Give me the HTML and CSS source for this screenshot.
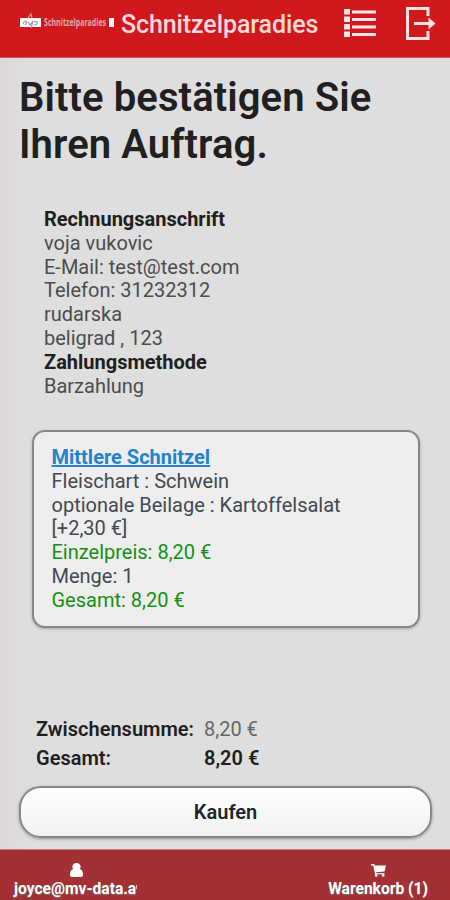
FILE: index.html
```html
<!DOCTYPE html>
<html lang="de">
<head>
<meta charset="utf-8">
<title>Schnitzelparadies</title>
<link rel="stylesheet" href="styles.css">
</head>
<body>
<div class="app">
  <header class="topbar">
    <div class="logo">
      <span class="logo-badge"><svg viewBox="0 0 21 18"><path class="logo-bg" d="M0 5H21V14H0Z"/><path class="logo-mark" d="M3 11Q4 7 7 9L5 12M8 9L10 12L13 8L11 15M14 9Q18 7 17 11L14 12"/><path class="logo-tip" d="M8 5L11 1L12 5"/></svg></span>
      <span class="logo-text">Schnitzelparadies</span>
      <span class="logo-end"></span>
    </div>
    <div class="brand">Schnitzelparadies</div>
    <svg class="icon-list" viewBox="0 0 34 30"><path d="M1 1h6v5.500H1zM1 8.500h6v5.500H1zM1 16h6v5.500H1zM1 23.500h6v5.500H1zM9 2.500h24v3H9zM9 10h24v3H9zM9 17.500h24v3H9zM9 25h24v3H9z"/></svg>
    <svg class="icon-exit" viewBox="0 0 32 36"><path class="exit-line" d="M23 10V2.500H2.500V32.500H23V25M9 17.500H25"/><path class="exit-head" d="M23.500 11.500L30.500 17.500L23.500 23.500Z"/></svg>
  </header>
  <main class="content">
    <h1 class="title">Bitte bestätigen Sie<br>Ihren Auftrag.</h1>
    <section class="address">
      <p><b>Rechnungsanschrift</b></p>
      <p>voja vukovic</p>
      <p>E-Mail: test@test.com</p>
      <p>Telefon: 31232312</p>
      <p>rudarska</p>
      <p>beligrad , 123</p>
      <p><b>Zahlungsmethode</b></p>
      <p>Barzahlung</p>
    </section>
    <section class="card">
      <p><a class="product">Mittlere Schnitzel</a></p>
      <p>Fleischart : Schwein</p>
      <p>optionale Beilage : Kartoffelsalat</p>
      <p>[+2,30 €]</p>
      <p class="price">Einzelpreis: 8,20 €</p>
      <p>Menge: 1</p>
      <p class="price">Gesamt: 8,20 €</p>
    </section>
    <dl class="totals">
      <dt>Zwischensumme:</dt><dd>8,20 €</dd>
      <dt>Gesamt:</dt><dd class="sum">8,20 €</dd>
    </dl>
    <button class="buy">Kaufen</button>
  </main>
  <footer class="tabbar">
    <div class="tab tab-user">
      <svg class="icon-user" viewBox="0 0 14 15"><path d="M7 0a4 4 0 0 1 3.500 6.500C13 7.500 14 9.500 14 12.500Q14 15 12 15H2Q0 15 0 12.500C0 9.500 1 7.500 3.500 6.500A4 4 0 0 1 7 0Z"/></svg>
      <span class="tab-label">joyce@mv-data.a</span>
    </div>
    <div class="tab tab-cart">
      <svg class="icon-cart" viewBox="0 0 16 14"><path d="M0 0H3.500L4 1.500H16L14.500 8L5.500 9V10H14.500V11H4.200L4 9.500L2.300 1.500H0Z"/><circle cx="5.500" cy="12.300" r="1.500"/><circle cx="13" cy="12.300" r="1.500"/></svg>
      <span class="tab-label">Warenkorb (1)</span>
    </div>
  </footer>
</div>
</body>
</html>
```

FILE: styles.css
```css
* { box-sizing: border-box; }
body { margin: 0; font-family: Roboto, sans-serif; }
p, h1, dl, dd { margin: 0; }
b { font-weight: 700; color: #202020; }
.app {
  width: 450px; height: 900px; overflow: hidden;
  display: flex; flex-direction: column;
  background: linear-gradient(90deg, #dcd8d9 0, #dedede 24px, #dedede 100%);
}
.topbar {
  height: 58px; flex: none; display: flex; align-items: flex-start;
  background: #d0181d; border-bottom: 1px solid #c9565a;
  padding-left: 20px;
}
.logo { display: flex; align-items: center; width: 95px; height: 18px; margin-top: 13px; flex: none; }
.logo-badge { width: 21px; height: 18px; }
.logo-badge svg { display: block; width: 21px; height: 18px; }
.logo-bg { fill: #fff; }
.logo-mark { fill: none; stroke: #a99; stroke-width: 1.200; }
.logo-tip { fill: none; stroke: #d9a09c; stroke-width: 1.200; }
.logo-text {
  width: 63px; margin-left: 3px; white-space: nowrap;
  font: 700 11px/18px "Open Sans", sans-serif; color: #dda9a5;
  transform: scaleX(.64); transform-origin: 0 50%;
}
.logo-end { width: 5px; height: 9px; margin-left: 2px; background: #fff; }
.brand {
  width: 222px; margin: 10px 0 0 6px; white-space: nowrap;
  font-weight: 500; font-size: 25px; line-height: 30px; letter-spacing: -.1px; color: #ffd9d9;
}
.icon-list { width: 34px; height: 30px; margin-top: 8px; fill: #ffe6e6; }
.icon-exit { width: 32px; height: 36px; margin: 6px 0 0 28px; }
.exit-line { fill: none; stroke: #ffe2e2; stroke-width: 3; }
.exit-head { fill: #ffe2e2; }
.content { flex: 1; display: flex; flex-direction: column; padding: 16px 18px 0 19px; }
.title { font-weight: 600; font-size: 40px; line-height: 47px; letter-spacing: .1px; color: #202020; white-space: nowrap; }
.address { margin: 40px 0 0 25px; font-size: 20px; line-height: 23.8px; color: #4c4c4c; }
.card {
  width: 388px; height: 198px; margin: 31.600px 0 0 12.500px; padding: 14px 18px;
  border: 2px solid #888; border-radius: 13px; background: #eee;
  box-shadow: 0 1px 3px rgba(0,0,0,.25);
  font-size: 20px; line-height: 23.8px; color: #414a50; white-space: nowrap;
}
.product { font-weight: 700; color: #2583c9; text-decoration: underline; }
.price { color: #149014; }
.totals {
  margin: 87px 0 0 17px; display: grid; grid-template-columns: 168px auto;
  font-size: 20px; line-height: 29px; color: #666;
}
.totals dt, .totals .sum { font-weight: 600; color: #202020; }
.buy {
  width: 413px; height: 52px; margin: 13px 0 0; padding: 0;
  border: 2px solid #888; border-radius: 22px;
  background: linear-gradient(#fff, #f1f1f1);
  box-shadow: 0 1px 3px rgba(0,0,0,.35);
  font: 600 20px/48px Roboto, sans-serif; color: #1c282e;
}
.tabbar {
  height: 51px; flex: none; display: flex; justify-content: space-between;
  padding: 13px 22px 0 14px;
  background: #a33034; border-top: 1px solid #c48082; color: #fff;
}
.tab { display: flex; flex-direction: column; align-items: center; }
.tab-label { font-weight: 700; font-size: 15.600px; line-height: 18px; white-space: nowrap; text-shadow: 0 1px 1px #777; }
.tab-user .tab-label { width: 124px; }
.tab-user .tab-label::after {
  content: ""; display: inline-block; width: 1px; height: 4px;
  background: #e3b9ba; vertical-align: 5px;
}
.icon-user { width: 13px; height: 14px; margin-bottom: 3px; fill: #fff; }
.icon-cart { width: 15px; height: 13px; margin: 1px 0 3px; fill: #fff; }
```
